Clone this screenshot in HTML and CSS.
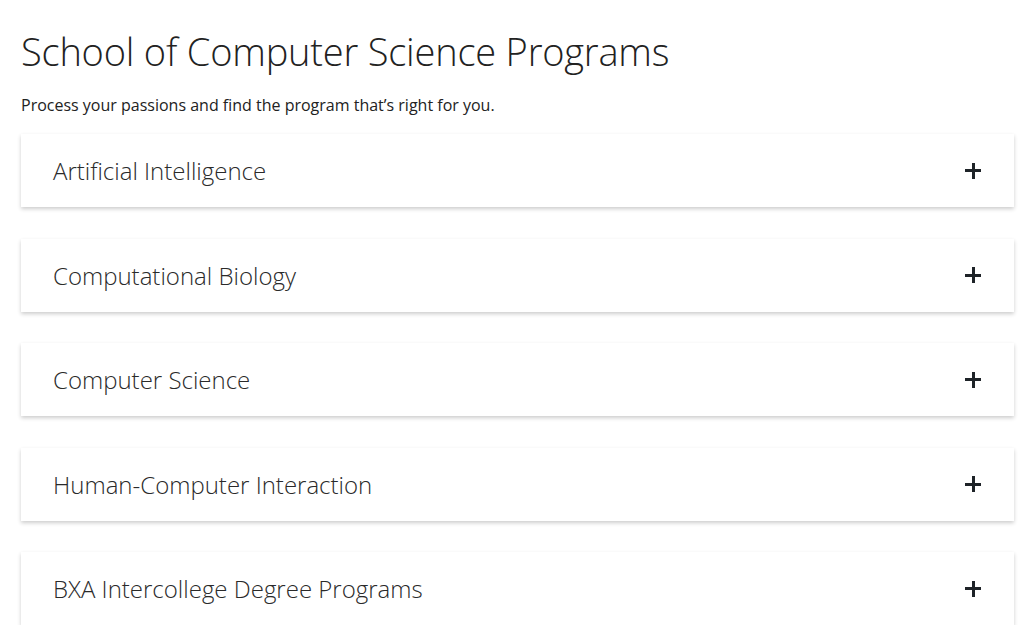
FILE: index.html
```html
<!DOCTYPE html>
<html>
<head>
<meta charset="utf-8">
<link rel="stylesheet" href="styles.css">
</head>
<body>
<main class="page">
  <h1 class="title">School of Computer Science Programs</h1>
  <p class="lead">Process your passions and find the program that’s right for you.</p>
  <div class="accordion">
    <div class="item"><span class="label">Artificial Intelligence</span><span class="plus"></span></div>
    <div class="item"><span class="label">Computational Biology</span><span class="plus"></span></div>
    <div class="item"><span class="label">Computer Science</span><span class="plus"></span></div>
    <div class="item"><span class="label">Human-Computer Interaction</span><span class="plus"></span></div>
    <div class="item"><span class="label">BXA Intercollege Degree Programs</span><span class="plus"></span></div>
  </div>
</main>
</body>
</html>
```

FILE: styles.css
```css
html, body { margin: 0; padding: 0; background: #fff; }
body { font-family: "Open Sans", "Liberation Sans", sans-serif; color: #222; }
.page { padding: 25px 13px 0 21px; }
.title { font-weight: 300; font-size: 38px; letter-spacing: -0.2px; line-height: 52px; margin: 0; color: #222; }
.lead { font-size: 16px; line-height: 22px; margin: 17px 0 18px; color: #222; }
.accordion { display: flex; flex-direction: column; gap: 31.5px; }
.item {
  height: 73px; display: flex; align-items: center; justify-content: space-between;
  padding: 0 33px 0 32px; background: #fff;
  box-shadow: 0 2px 4px rgba(0,0,0,0.2);
}
.label { font-weight: 300; font-size: 24px; color: #2a2a2a; }
.plus { position: relative; width: 16px; height: 16px; }
.plus::before, .plus::after { content: ""; position: absolute; background: #1e2328; }
.plus::before { left: 0; top: 6.5px; width: 16px; height: 3px; }
.plus::after { top: 0; left: 6.5px; width: 3px; height: 16px; }
```
